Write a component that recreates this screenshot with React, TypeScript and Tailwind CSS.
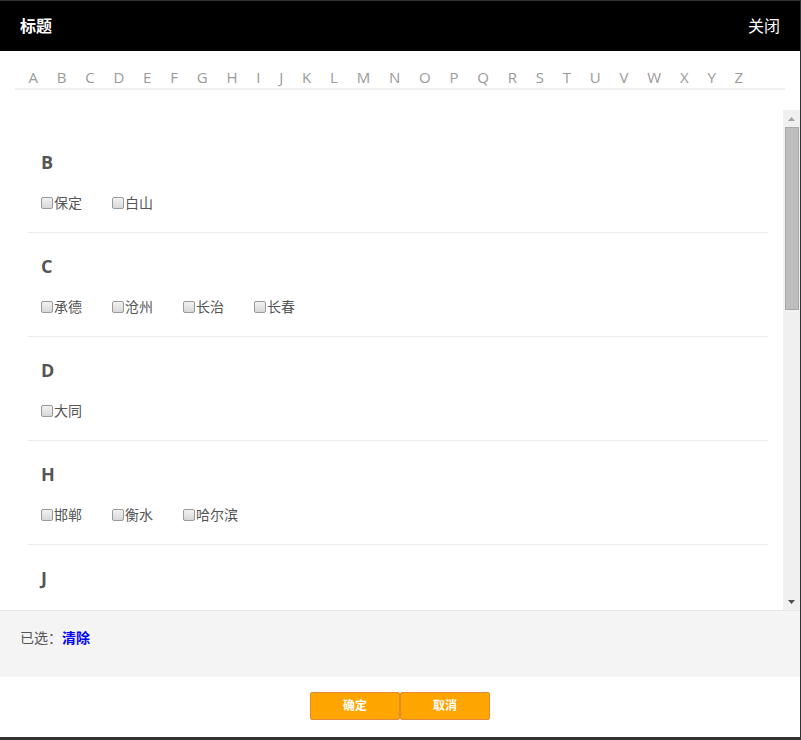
import { useState } from 'react';

const LETTERS = 'ABCDEFGHIJKLMNOPQRSTUVWXYZ'.split('');

const GROUPS: { letter: string; cities: string[] }[] = [
  { letter: 'B', cities: ['保定', '白山'] },
  { letter: 'C', cities: ['承德', '沧州', '长治', '长春'] },
  { letter: 'D', cities: ['大同'] },
  { letter: 'H', cities: ['邯郸', '衡水', '哈尔滨'] },
  { letter: 'J', cities: [] },
];

function Box({ checked }: { checked: boolean }) {
  return (
    <span
      className={`inline-block w-[12px] h-[12px] mr-[1px] rounded-[2px] border border-[#9a9a9a] ${
        checked ? 'bg-[#3b82f6]' : 'bg-gradient-to-b from-[#f2f2f2] to-[#d8d8d8]'
      }`}
    />
  );
}

export default function App() {
  const [picked, setPicked] = useState<string[]>([]);

  const toggle = (city: string) =>
    setPicked((p) => (p.includes(city) ? p.filter((c) => c !== city) : [...p, city]));

  return (
    <div className="w-[801px] h-[740px] flex flex-col bg-white border-r border-b-[3px] border-[#333] font-['Open_Sans','Noto_Sans_CJK_SC',sans-serif] overflow-hidden">
      <header className="h-[51px] shrink-0 bg-black border-t border-[#333] flex items-center justify-between px-[20px] text-white text-[16px]">
        <span className="font-bold">标题</span>
        <span>关闭</span>
      </header>

      <div className="mx-[15px] mt-[15px] mb-[20px] pl-[4px] flex border-b-2 border-[#f0f0f0] shrink-0">
        {LETTERS.map((l) => (
          <span key={l} className="px-[9.4px] leading-[22px] text-[15px] text-[#9a9a9a] cursor-pointer">
            {l}
          </span>
        ))}
      </div>

      <div className="h-[500px] shrink-0 flex">
        <div className="flex-1 overflow-hidden pl-[28px] pr-[15px] pt-[19px]">
          {GROUPS.map((g) => (
            <section key={g.letter} className="px-[13px] pt-[20px] pb-[19px] border-b border-[#ececec]">
              <h3 className="text-[18px] leading-[26px] font-bold text-[#555]">{g.letter}</h3>
              <div className="mt-[18px] flex min-h-[20px]">
                {g.cities.map((c) => (
                  <label
                    key={c}
                    onClick={() => toggle(c)}
                    className="mr-[30px] flex items-center text-[14px] leading-[20px] text-[#555] cursor-pointer"
                  >
                    <Box checked={picked.includes(c)} />
                    {c}
                  </label>
                ))}
              </div>
            </section>
          ))}
        </div>
        <div className="w-[17px] bg-[#f0f0f0] flex flex-col items-center">
          <div className="h-[17px] flex items-center justify-center">
            <svg width="7" height="4" viewBox="0 0 7 4">
              <path d="M0 4 L3.5 0 L7 4 Z" fill="#a3a3a3" />
            </svg>
          </div>
          <div className="w-[14px] h-[183px] bg-[#bdbdbd] border border-[#a8a8a8]" />
          <div className="flex-1" />
          <div className="h-[17px] flex items-center justify-center">
            <svg width="7" height="4" viewBox="0 0 7 4">
              <path d="M0 0 L7 0 L3.5 4 Z" fill="#505050" />
            </svg>
          </div>
        </div>
      </div>

      <div className="h-[67px] shrink-0 bg-[#f4f4f4] border-t border-[#e8e8e8] px-[20px] pt-[17px] flex items-start text-[14px] leading-[20px] text-[#555]">
        <span>已选：</span>
        {picked.map((c) => (
          <span key={c} className="mr-[6px]">{c}</span>
        ))}
        <span className="font-bold text-[#0000ff] cursor-pointer" onClick={() => setPicked([])}>
          清除
        </span>
      </div>

      <div className="flex-1 flex justify-center pt-[15px]">
        <button className="w-[90px] h-[28px] bg-[#ffa500] border border-[#e08a3c] rounded-[2px] text-white text-[12px] font-bold">
          确定
        </button>
        <button className="w-[90px] h-[28px] bg-[#ffa500] border border-[#e08a3c] rounded-[2px] text-white text-[12px] font-bold">
          取消
        </button>
      </div>
    </div>
  );
}
